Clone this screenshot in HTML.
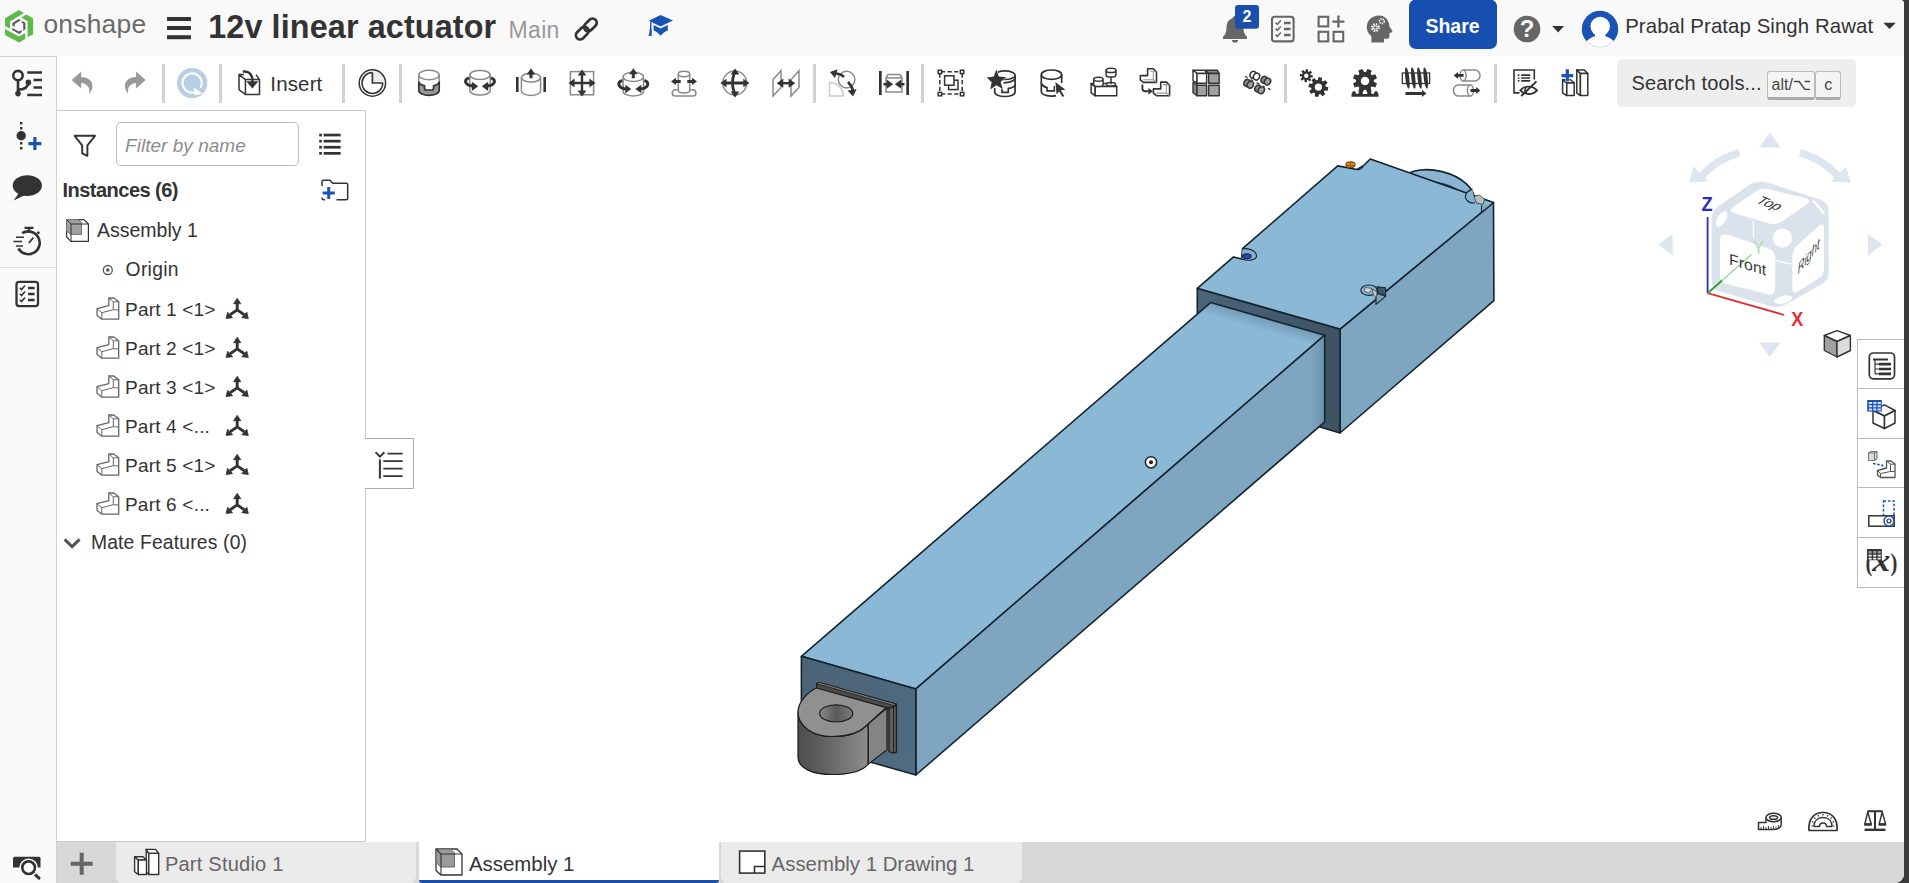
<!DOCTYPE html>
<html lang="en">
<head>
<meta charset="utf-8">
<title>12v linear actuator | Assembly 1</title>
<style>
*{box-sizing:border-box;margin:0;padding:0}
html,body{width:1909px;height:883px;overflow:hidden;background:#3b3b3b}
body{font-family:"Liberation Sans",sans-serif;color:#333;position:relative}
.abs{position:absolute}
.t{position:absolute;white-space:nowrap;line-height:1}
svg{position:absolute;overflow:visible}
.sep{position:absolute;top:64px;width:3px;height:39px;background:#d0d0d0}
.row{position:absolute;left:57px;width:308px;height:39px}
</style>
</head>
<body>
<!-- base regions -->
<div class="abs" style="left:0;top:0;width:1904px;height:883px;background:#fff;border-radius:0 4px 9px 0"></div>
<div class="abs" style="left:0;top:0;width:1904px;height:56px;background:#f9f9f9;border-top-right-radius:4px"></div>
<div class="abs" style="left:0;top:56px;width:57px;height:827px;background:#fafafa;border-top:1px solid #d2d2d2;border-right:1px solid #d2d2d2"></div>
<div class="abs" style="left:57px;top:110px;width:309px;height:1px;background:#ccc"></div>
<div class="abs" style="left:57px;top:111px;width:309px;height:731px;background:#fff;border-right:1px solid #ccc;border-bottom:1px solid #ccc"></div>
<!-- ================= HEADER ================= -->
<svg style="left:0;top:0" width="1909" height="56" viewBox="0 0 1909 56">
  <!-- onshape logo -->
  <g fill="#5db94a">
    <path d="M5 18.200 18.900 10 23.900 13 10 21.400 10 28.400 5 25.900Z"/>
    <path d="M21.400 17.400 26.400 14.500 33.100 18.400 33.100 34.400 27.600 37.100 27.600 21.200Z"/>
    <path d="M5 28.900 18.900 36.400 25.200 32.900 25.200 38.900 19.200 42.400 5 34.900Z"/>
  </g>
  <g fill="#5a5a5a">
    <path d="M12.400 22.900 18.900 18.900 20.900 20.200 14.700 23.900 14.700 26.800 12.400 25.700Z"/>
    <path d="M20.900 22.200 22.700 21.200 25.400 22.900 25.400 28.900 23.200 30.900 23.200 23.500Z"/>
    <path d="M12.200 27.900 18.900 31.600 21.700 29.900 21.700 32 19.200 33.900 12.200 30Z"/>
  </g>
  <!-- hamburger -->
  <rect x="167" y="17" width="24" height="4" fill="#333"/>
  <rect x="167" y="26" width="24" height="4" fill="#333"/>
  <rect x="167" y="35.2" width="24" height="4" fill="#333"/>
  <!-- link icon -->
  <g fill="none" stroke="#333" stroke-width="2.7" stroke-linecap="round" transform="translate(586.3 29) rotate(-45)">
    <rect x="-13" y="-4.2" width="14.5" height="8.4" rx="4.2"/>
    <rect x="-1.5" y="-4.2" width="14.5" height="8.4" rx="4.2"/>
  </g>
  <!-- graduation cap -->
  <g fill="#1a53b5">
    <path d="M660.6 14.9 673 20.6 660.6 26.6 648.6 20.8Z"/>
    <path d="M653.6 25 653.6 30.4 C656 31.4 658.6 33 660.6 35.8 C662.6 33 665.4 31.4 667.8 30.4 L667.8 25 660.6 28.6Z"/>
    <path d="M650.2 21.6 651.6 22.2 651.4 28 C652 30 652 33 651.4 36 L648.6 36 C649.6 32 649.6 30 650 28Z"/>
  </g>
  <!-- bell -->
  <path fill="#666" d="M1235 16c-1.400 0-2.400 1-2.400 2.300c-3.800 1.100-6 4.300-6 8.700c0 4.800-1.200 7.800-3.600 9.800v2.200h24v-2.200c-2.400-2-3.600-5-3.600-9.800c0-4.400-2.200-7.600-6-8.700C1237.400 17 1236.400 16 1235 16z M1231.800 40h6.400c0 1.600-1.400 2.600-3.200 2.600s-3.200-1-3.200-2.600z"/>
  <!-- badge -->
  <rect x="1235" y="5" width="24" height="23.8" rx="3" fill="#1a4fad"/>
  <!-- checklist icon -->
  <g fill="none" stroke="#666" stroke-width="2.1">
    <rect x="1272" y="16.8" width="21.6" height="24.6" rx="2.6"/>
    <path d="M1284 23h6.600M1284 29h6.600M1284 35h6.600" stroke-width="2.6"/>
    <path d="M1275.600 22.600l1.800 1.800 3.400-4M1275.600 28.600l1.800 1.800 3.400-4M1275.600 34.600l1.800 1.800 3.400-4" stroke-width="1.5"/>
  </g>
  <!-- grid plus -->
  <g fill="none" stroke="#666" stroke-width="2.1">
    <rect x="1318.600" y="16.800" width="9.600" height="9.600"/>
    <rect x="1318.600" y="31.800" width="9.600" height="9.600"/>
    <rect x="1333.600" y="31.800" width="9.600" height="9.600"/>
    <path d="M1338.400 15.600v12M1332.400 21.600h12" stroke-width="2.3"/>
  </g>
  <!-- head with gears -->
  <g>
    <path fill="#666" d="M1379 15.400c-7 0-12.200 5-12.200 11.600c0 4 1.800 7 4.600 9.200v6.200h12.600v-3.600h3.400c1.200 0 2-.800 2-2v-3.600l2.400-1c.600-.300.700-.900.400-1.400l-2.800-4.600c-.200-6.200-4.400-10.800-10.400-10.800z"/>
    <circle cx="1375.400" cy="27.600" r="3.300" fill="none" stroke="#f9f9f9" stroke-width="2.200" stroke-dasharray="1.500 1.100"/>
    <circle cx="1375.400" cy="27.600" r="1.700" fill="none" stroke="#f9f9f9" stroke-width="1"/>
    <circle cx="1381.800" cy="21.200" r="2.300" fill="none" stroke="#f9f9f9" stroke-width="1.800" stroke-dasharray="1.200 .900"/>
  </g>
  <!-- share button -->
  <rect x="1409" y="-.500" width="88" height="49.500" rx="7" fill="#174fb0"/>
  <!-- help -->
  <circle cx="1527" cy="29" r="13.300" fill="#666"/>
  <path d="M1552.300 25.900h11.700l-5.850 6.500z" fill="#333"/>
  <!-- avatar -->
  <circle cx="1600" cy="29" r="18.200" fill="#1a53b5"/>
  <clipPath id="avc"><circle cx="1600" cy="29" r="18.200"/></clipPath>
  <g clip-path="url(#avc)" fill="#fff">
    <circle cx="1600.200" cy="26.400" r="9.700"/>
    <ellipse cx="1600.200" cy="46.400" rx="15.600" ry="10.600"/>
    <rect x="1595" y="32" width="10.400" height="8"/>
  </g>
  <path d="M1883.300 22.700h12.500l-6.250 6.400z" fill="#333"/>
</svg>
<div class="t" style="left:43.4px;top:10.7px;font-size:26.4px;color:#6a6a6a;letter-spacing:.25px">onshape</div>
<div class="t" style="left:208.2px;top:10.9px;font-size:32.3px;font-weight:bold;color:#333;letter-spacing:.14px">12v linear actuator</div>
<div class="t" style="left:508.600px;top:18.600px;font-size:23px;color:#999;letter-spacing:.3px">Main</div>
<div class="t" style="left:1242.4px;top:9.2px;font-size:16px;font-weight:bold;color:#fff">2</div>
<div class="t" style="left:1425.400px;top:16.800px;font-size:19.5px;font-weight:bold;color:#fff">Share</div>
<div class="t" style="left:1519.700px;top:17.300px;font-size:24px;font-weight:bold;color:#f9f9f9">?</div>
<div class="t" style="left:1625.200px;top:16.400px;font-size:20.400px;color:#333;letter-spacing:.08px">Prabal Pratap Singh Rawat</div>
<!-- ================= TOOLBAR ================= -->
<div class="sep" style="left:162px"></div><div class="sep" style="left:219px"></div><div class="sep" style="left:342px"></div><div class="sep" style="left:399px"></div><div class="sep" style="left:813px"></div><div class="sep" style="left:921px"></div><div class="sep" style="left:1284px"></div><div class="sep" style="left:1494px"></div>
<svg style="left:0;top:0" width="1909" height="112" viewBox="0 0 1909 112">
<defs>
  <path id="ah" d="M0 0 L-6.500 -4.600 L-6.500 4.600Z"/>
</defs>
<!-- left column top icon: version graph -->
<g stroke="#333" fill="none" stroke-width="2.600">
  <circle cx="18" cy="75.600" r="4.700"/>
  <path d="M18 80.300V93.500M18 89.600C24 89.600 28 88 28.400 82.600"/>
  <circle cx="18" cy="93.600" r="2.800" fill="#333" stroke="none"/>
  <circle cx="28.400" cy="82.400" r="2.800" fill="#333" stroke="none"/>
  <path d="M27.200 72.500H42M33.500 80H42M33.500 87.500H42M27.200 95H42" stroke-width="2.700"/>
</g>
<!-- undo / redo -->
<path fill="#999" d="M71.700 80 81.200 71.400V77C88 77 92.600 81 92.400 86 92.300 89 91 91.600 89.300 93.700 90 88 87.500 83.300 81.200 83.100V88.400Z"/>
<path fill="#999" d="M145.600 80 136.100 71.400V77C129.300 77 124.700 81 124.900 86 125 89 126.300 91.600 128 93.700 127.300 88 129.800 83.300 136.100 83.100V88.400Z"/>
<!-- update circle -->
<circle cx="192.100" cy="83" r="15.100" fill="#b9cde5"/>
<path d="M200.400 87.800A9.600 9.600 0 1 0 195.400 92" fill="none" stroke="#fff" stroke-width="2.100"/>
<path d="M193.600 87.600 202.600 93.400 194.600 95.600Z" fill="#fff"/>
<!-- insert -->
<g fill="none" stroke="#333" stroke-width="1.500" stroke-linejoin="round">
  <path d="M245.400 79.600H259.500V94.500H245.400ZM245.400 79.600 239 74.600V89.600L245.400 94.500M239 74.600H244M256 74.600 259.500 79.600"/>
  <path d="M242.800 71.600C249.500 70.600 252.600 75 252.500 82" stroke-width="2.400"/>
</g>
<path d="M246.200 81.200H258.400L252.400 88.400Z" fill="#333"/>
<!-- snap/clock icon -->
<g fill="none" stroke="#333" stroke-width="1.500">
  <path d="M372.400 83V69.600A13.400 13.400 0 0 1 385.800 83Z" fill="#ececec" stroke="none"/>
  <circle cx="372.400" cy="83" r="13.200"/>
  <path d="M372.400 72.600A10.400 10.400 0 1 0 382.800 83"/>
  <path d="M372.400 72.600V83H382.800" stroke-width="1.700"/>
</g>
<!-- fastened -->
<g fill="none" stroke="#8a8a8a" stroke-width="1.500">
  <ellipse cx="429" cy="75" rx="10.200" ry="4.700"/>
  <path d="M418.800 75V84M439.200 75V84"/>
  <path d="M418.800 81.600V90.600A10.200 4.700 0 0 0 439.200 90.600V81.600A10.200 4.700 0 0 1 433.600 85.800V88Q433.600 90 431.600 90H426.500Q424.500 90 424.500 88V85.800A10.200 4.700 0 0 1 418.800 81.600Z" fill="#989898" stroke="#333" stroke-width="1.700"/>
</g>
<!-- revolute -->
<g fill="none" stroke="#8a8a8a" stroke-width="1.500">
  <ellipse cx="480" cy="75" rx="10.200" ry="4.600"/>
  <path d="M469.800 75V90.500A10.200 4.600 0 0 0 490.200 90.500V75"/>
  <path d="M469 77.800C463.500 80 464.500 85.500 473.500 86.200M491 77.800C496.500 80 495.500 85.500 486.500 86.200" stroke="#333" stroke-width="3"/>
</g>
<use href="#ah" transform="translate(478.300 86.300)" fill="#333"/>
<use href="#ah" transform="translate(481.700 86.300) scale(-1 1)" fill="#333"/>
<!-- slider -->
<g fill="none" stroke="#8a8a8a" stroke-width="1.500">
  <ellipse cx="531" cy="77.600" rx="9.600" ry="4.400"/>
  <path d="M521.400 77.600V91A9.600 4.400 0 0 0 540.600 91V77.600"/>
</g>
<rect x="516" y="77" width="2.600" height="15" fill="#333"/><rect x="543.400" y="77" width="2.600" height="15" fill="#333"/>
<path d="M531 68.300 535.300 74.400H532.500V78.300H529.500V74.400H526.700Z" fill="#333"/>
<!-- planar -->
<rect x="570.400" y="71.600" width="23.200" height="23.200" fill="none" stroke="#8a8a8a" stroke-width="1.500"/>
<g fill="#333">
  <path d="M580.800 74H583.200V92H580.800ZM573 81.800H591V84.200H573Z"/>
  <path d="M582 69.500 586.400 75.600H577.600ZM582 96.500 586.400 90.400H577.600ZM568.500 83 574.600 78.600V87.400ZM595.500 83 589.400 78.600V87.400Z"/>
</g>
<!-- cylindrical -->
<g fill="none" stroke="#8a8a8a" stroke-width="1.500">
  <ellipse cx="633.300" cy="76.900" rx="10.200" ry="4.600"/>
  <path d="M623.100 76.900V91.400A10.200 4.600 0 0 0 643.500 91.400V76.900"/>
  <path d="M622.200 80.400C616.800 82.600 617.800 88.200 626.500 88.900M644.400 80.400C649.800 82.600 648.800 88.200 640.100 88.900" stroke="#333" stroke-width="3"/>
</g>
<path d="M633.300 68.300 637.600 74.200H634.800V78.200H631.800V74.200H629Z" fill="#333"/>
<use href="#ah" transform="translate(631.300 89.100) scale(.92)" fill="#333"/>
<use href="#ah" transform="translate(635.300 89.100) scale(-.92 .92)" fill="#333"/>
<!-- pin slot -->
<g fill="none" stroke="#8a8a8a" stroke-width="1.500">
  <ellipse cx="684" cy="74" rx="5.700" ry="2.700"/>
  <path d="M678.300 74V90.500A5.700 2.400 0 0 0 689.700 90.500V74"/>
  <path d="M678.300 89.800H675.400A3.100 3.100 0 0 0 675.400 96H692.800A3.100 3.100 0 0 0 692.800 89.800H689.700"/>
</g>
<path d="M671 81.400 676 77.700V79.900H680.700V82.900H676V85.100Z" fill="#333"/>
<path d="M697 81.400 692 77.700V79.900H687.300V82.900H692V85.100Z" fill="#333"/>
<!-- ball -->
<circle cx="734.800" cy="83" r="11.900" fill="none" stroke="#8a8a8a" stroke-width="1.500"/>
<path d="M725 83H745M734.500 73C732 79 732 87 734.500 93" fill="none" stroke="#333" stroke-width="2.800"/>
<use href="#ah" transform="translate(720.300 83) scale(-.95 .95)" fill="#333"/>
<use href="#ah" transform="translate(749.500 83) scale(.95)" fill="#333"/>
<use href="#ah" transform="translate(735 68.400) rotate(-90) scale(.95)" fill="#333"/>
<use href="#ah" transform="translate(735 97.600) rotate(90) scale(.95)" fill="#333"/>
<!-- parallel -->
<g fill="none" stroke="#8a8a8a" stroke-width="1.500">
  <path d="M773 79.600 781 70.800V87.400L773 96Z M791 79.600 799 70.800V87.400L791 96Z"/>
</g>
<path d="M781 82H791V84.400H781Z" fill="#333"/>
<use href="#ah" transform="translate(776.800 83.200) scale(-1 1)" fill="#333"/>
<use href="#ah" transform="translate(795.200 83.200)" fill="#333"/>
<!-- tangent -->
<g fill="none" stroke-width="1.500">
  <path d="M829.500 96V82.500A14 14 0 0 1 843.500 96Z" stroke="#ccc"/>
  <circle cx="846.600" cy="79.600" r="8.300" stroke="#8a8a8a"/>
  <path d="M835 73.500C839 73.500 842 75 844 77M848 82C851 85 852.500 88 853 91" stroke="#333" stroke-width="2.600"/>
</g>
<use href="#ah" transform="translate(830 72) rotate(195)" fill="#333"/>
<use href="#ah" transform="translate(853 96.400) rotate(82)" fill="#333"/>
<!-- width -->
<rect x="879" y="71" width="2.700" height="24" fill="#333"/><rect x="906.300" y="71" width="2.700" height="24" fill="#333"/>
<path d="M886 78 888 74.600H900L902 78V92H886ZM886 78H902" fill="none" stroke="#8a8a8a" stroke-width="1.500"/>
<path d="M883.500 83H888V85.400H883.500ZM900 83H904.500V85.400H900Z" fill="#333"/>
<use href="#ah" transform="translate(893.200 84.200)" fill="#333"/>
<use href="#ah" transform="translate(894.800 84.200) scale(-1 1)" fill="#333"/>
<!-- group -->
<g fill="none" stroke="#333" stroke-width="1.500">
  <path d="M941 71.800H961M941 94H961M939.800 73.500V92.500M962.200 73.500V92.500" stroke-dasharray="4.200 2.400"/>
  <rect x="938.200" y="70.200" width="3.400" height="3.400" fill="#fff"/><rect x="960.400" y="70.200" width="3.400" height="3.400" fill="#fff"/>
  <rect x="938.200" y="92.400" width="3.400" height="3.400" fill="#fff"/><rect x="960.400" y="92.400" width="3.400" height="3.400" fill="#fff"/>
  <rect x="948.600" y="80.200" width="9.400" height="9.400"/>
  <rect x="944.600" y="75.800" width="9.400" height="9.400" fill="#fff"/>
</g>
<!-- favorite standard content (star + cylinder) -->
<g fill="none" stroke="#333" stroke-width="1.700">
  <ellipse cx="1004.900" cy="75.200" rx="10.200" ry="4.300"/>
  <path d="M1015.100 75.200V92A10.200 4.500 0 0 1 994.700 92V88"/>
  <path d="M1003.500 82.800C1009 82.600 1014 81 1015.100 78.600"/>
  <path d="M1002 87V92.400H1008.300V88.400C1011.500 88 1014.500 86.800 1015.100 85"/>
</g>
<path d="M996.200 69.600 998.900 76.400 1006.200 77.200 1000.600 82 1002.800 89 996.300 85.300 990.200 89.400 991.700 82.300 986.800 77.400 993.900 76.500Z" fill="#333" stroke="#fff" stroke-width="1" paint-order="stroke"/>
<!-- select standard content (cyl + cursor) -->
<g fill="none" stroke="#333" stroke-width="1.700">
  <ellipse cx="1051.500" cy="74.700" rx="10.200" ry="4.700"/>
  <path d="M1041.300 74.700V91.500A10.200 4.600 0 0 0 1056 95.600M1061.700 74.700V83"/>
  <path d="M1041.300 83.500C1042.500 85.800 1044.500 87.200 1047 87.700V90.800H1054.400V86"/>
</g>
<path d="M1055.400 81.900 1065.400 89.800 1060.700 90.300 1064.300 96 1062.600 97.100 1059.100 91.400 1056.600 94.600Z" fill="#333" stroke="#fff" stroke-width="1.200" paint-order="stroke"/>
<!-- lego / standard -->
<g fill="#fff" stroke="#333" stroke-width="1.500" stroke-linejoin="round">
  <path d="M1091.100 83.500 1095.200 86.600V95.800L1091.100 92.600Z"/>
  <path d="M1091.100 83.500 1095.200 86.600H1116.700L1113.500 83.500Z"/>
  <rect x="1095.200" y="86.600" width="21.500" height="9.200"/>
  <path d="M1093.700 79.300V84.500A4.700 2 0 0 0 1103.100 84.500V79.300"/><ellipse cx="1098.400" cy="79.300" rx="4.700" ry="2"/>
  <ellipse cx="1111" cy="84.300" rx="4.500" ry="1.700"/>
  <path d="M1111 84.300V76.500"/>
  <path d="M1106.100 70.400V75A4.900 2.100 0 0 0 1115.900 75V70.400"/><ellipse cx="1111" cy="70.400" rx="4.900" ry="2.100"/>
</g>
<!-- replicate -->
<g id="repl" stroke-linejoin="round">
  <path d="M1147.600 68.800H1153.400L1156.500 72V82.400H1143.400L1140.300 79.800V75.600H1147.600Z" fill="#fff" stroke="#333" stroke-width="1.600"/>
  <path d="M1149.800 71.300H1153.300V79.800H1143.200M1153.300 71.300 1156.500 72M1153.300 79.800 1156.500 82.400" fill="none" stroke="#999" stroke-width="1.100"/>
</g>
<use href="#repl" x="13.100" y="13.300"/>
<path d="M1142.400 84.500V88.500C1142.400 90.600 1143.400 91.300 1145.500 91.300H1148.700" fill="none" stroke="#333" stroke-width="1.900"/>
<path d="M1153 91.300 1148.400 88.100V94.500Z" fill="#333"/>
<!-- pattern 2x2 -->
<g stroke="#333" stroke-width="1.400" stroke-linejoin="round">
  <path d="M1193 70.300H1204.800L1206.600 73.500H1197Z" fill="#fff"/>
  <path d="M1205.600 70.300H1217.400L1219.200 73.500H1208.600Z" fill="#8a8a8a"/>
  <path d="M1193 70.300 1197 73.500V83.200L1193 80.600Z" fill="#fff"/>
  <path d="M1193 82.400 1197 85.200V95.800L1193 92.800Z" fill="#8a8a8a"/>
  <rect x="1197" y="73.500" width="9.600" height="9.700" fill="#fff"/>
  <rect x="1208.600" y="73.500" width="10.600" height="9.700" fill="#a0a0a0"/>
  <rect x="1197" y="85.200" width="9.600" height="10.600" fill="#a0a0a0"/>
  <rect x="1208.600" y="85.200" width="10.600" height="10.600" fill="#a0a0a0"/>
  <path d="M1197 83.200 1193 80.600M1206.600 73.500 1208.600 73.500M1206.600 83.200V85.200M1197 83.200V85.200" fill="none" stroke-width="1"/>
</g>
<!-- circular pattern -->
<g stroke="#333" stroke-width="1.500">
  <g transform="translate(1254.800 75.700) rotate(28)"><ellipse cx="-1.900" cy="0" rx="3" ry="3.500" fill="#fff"/><ellipse cx="1.900" cy="0" rx="3" ry="3.500" fill="#fff"/></g>
  <g transform="translate(1265.800 80.600) rotate(28)"><ellipse cx="-1.900" cy="0" rx="3" ry="3.500" fill="#8a8a8a"/><ellipse cx="1.900" cy="0" rx="3" ry="3.500" fill="#a0a0a0"/></g>
  <g transform="translate(1248.700 83.800) rotate(28)"><ellipse cx="-1.900" cy="0" rx="3" ry="3.500" fill="#8a8a8a"/><ellipse cx="1.900" cy="0" rx="3" ry="3.500" fill="#a0a0a0"/></g>
  <g transform="translate(1259.600 89.400) rotate(28)"><ellipse cx="-1.900" cy="0" rx="3" ry="3.500" fill="#8a8a8a"/><ellipse cx="1.900" cy="0" rx="3" ry="3.500" fill="#a0a0a0"/></g>
  <path d="M1245 76.200 1247.500 77.800M1250.500 79.500 1253 80.800M1256.500 82.600 1259.500 84.200M1263 86 1265 87M1268 88.200 1270.500 89.600" fill="none" stroke-width="1.300"/>
</g>
<!-- gears -->
<path fill="#333" fill-rule="evenodd" d="M1310.6 74.9 L1312.9 75.2 L1312.6 77.5 L1310.4 77.4 L1309.9 78.2 L1311.3 80.0 L1309.5 81.5 L1308.0 79.8 L1307.1 80.0 L1306.8 82.3 L1304.5 82.0 L1304.6 79.8 L1303.8 79.3 L1302.0 80.7 L1300.5 78.9 L1302.2 77.4 L1302.0 76.5 L1299.7 76.2 L1300.0 73.9 L1302.2 74.0 L1302.7 73.2 L1301.3 71.4 L1303.1 69.9 L1304.6 71.6 L1305.5 71.4 L1305.8 69.1 L1308.1 69.4 L1308.0 71.6 L1308.8 72.1 L1310.6 70.7 L1312.1 72.5 L1310.4 74.0Z M1308.5 75.7 A2.2 2.2 0 1 0 1304.1 75.7 A2.2 2.2 0 1 0 1308.5 75.7Z"/>
<path fill="#333" fill-rule="evenodd" d="M1325.6 86.4 L1328.4 87.3 L1327.7 90.8 L1324.7 90.5 L1323.9 91.7 L1325.3 94.3 L1322.4 96.3 L1320.5 94.0 L1319.1 94.3 L1318.2 97.1 L1314.7 96.4 L1315.0 93.4 L1313.8 92.6 L1311.2 94.0 L1309.2 91.1 L1311.5 89.2 L1311.2 87.8 L1308.4 86.9 L1309.1 83.4 L1312.1 83.7 L1312.9 82.5 L1311.5 79.9 L1314.4 77.9 L1316.3 80.2 L1317.7 79.9 L1318.6 77.1 L1322.1 77.8 L1321.8 80.8 L1323.0 81.6 L1325.6 80.2 L1327.6 83.1 L1325.3 85.0Z M1322.0 87.1 A3.6 3.6 0 1 0 1314.8 87.1 A3.6 3.6 0 1 0 1322.0 87.1Z"/>
<!-- rack pinion -->
<path fill="#333" fill-rule="evenodd" d="M1373.9 81.8 L1377.0 83.5 L1375.3 87.6 L1371.9 86.5 L1370.6 87.8 L1371.7 91.2 L1367.6 92.9 L1365.9 89.8 L1364.1 89.8 L1362.4 92.9 L1358.3 91.2 L1359.4 87.8 L1358.1 86.5 L1354.7 87.6 L1353.0 83.5 L1356.1 81.8 L1356.1 80.0 L1353.0 78.3 L1354.7 74.2 L1358.1 75.3 L1359.4 74.0 L1358.3 70.6 L1362.4 68.9 L1364.1 72.0 L1365.9 72.0 L1367.6 68.9 L1371.7 70.6 L1370.6 74.0 L1371.9 75.3 L1375.3 74.2 L1377.0 78.3 L1373.9 80.0Z M1369.2 80.9 A4.2 4.2 0 1 0 1360.8 80.9 A4.2 4.2 0 1 0 1369.2 80.9Z"/>
<path fill="#333" d="M1351.500 96.800V94L1353 91.300H1355L1356.500 94H1358L1359.500 91.300H1361.500L1363 94H1367L1368.500 91.300H1370.500L1372 94H1373.500L1375 91.300H1377L1378.500 94V96.800Z"/>
<!-- screw -->
<g fill="none" stroke="#333">
  <rect x="1402.300" y="73" width="27.300" height="10.500" stroke-width="1.300"/>
</g>
<g fill="#333">
  <path d="M1406 68.300C1408.200 72 1409.300 82 1408.600 87.700 1406.400 84 1405.300 74 1406 68.300Z" stroke="#333" stroke-width="1.700" stroke-linejoin="round"/>
  <path d="M1412 68.300C1414.200 72 1415.300 82 1414.600 87.700 1412.400 84 1411.300 74 1412 68.300Z" stroke="#333" stroke-width="1.700" stroke-linejoin="round"/>
  <path d="M1418.200 68.300C1420.400 72 1421.500 82 1420.800 87.700 1418.600 84 1417.500 74 1418.200 68.300Z" stroke="#333" stroke-width="1.700" stroke-linejoin="round"/>
  <path d="M1424.400 68.300C1426.600 72 1427.700 82 1427 87.700 1424.800 84 1423.700 74 1424.400 68.300Z" stroke="#333" stroke-width="1.700" stroke-linejoin="round"/>
  <path d="M1405.500 92H1422V89.700L1426.400 93.400 1422 97.100V94.900H1405.500Z"/>
</g>
<!-- linear relation -->
<g fill="#fff" stroke="#8a8a8a" stroke-width="1.500">
  <path d="M1463.100 69.900H1475A5 5.500 0 0 1 1475 80.900H1463.100"/><ellipse cx="1463.100" cy="75.400" rx="3" ry="5.500"/>
  <path d="M1470.400 85H1458.500A5 5.500 0 0 0 1458.500 96H1470.400"/><ellipse cx="1470.400" cy="90.500" rx="3" ry="5.500"/>
</g>
<path d="M1453.700 75.400 1458 72V74H1463.600V76.800H1458V78.800Z" fill="#333"/>
<path d="M1480.400 90.500 1476.100 87.100V89.100H1470.500V91.900H1476.100V93.900Z" fill="#333"/>
<!-- doc eye -->
<g fill="none" stroke="#333" stroke-width="1.600">
  <path d="M1519.500 92.900H1514V70H1534.300V79.500"/>
  <path d="M1521.200 75.100H1530.200M1521.200 78H1530.200M1521.200 80.900H1530.200" stroke-width="1.700"/>
  <path d="M1517.800 75.100H1519.400M1517.800 78H1519.400M1517.800 80.900H1519.400" stroke-width="1.700"/>
  <path d="M1520.300 90.300C1524.500 85.400 1532.700 85.400 1537 90.300 1532.700 95.200 1524.500 95.200 1520.300 90.300Z" stroke-width="1.900" fill="#fff"/>
  <path d="M1526 88A3 3 0 0 0 1527 93" stroke-width="1.600"/>
  <path d="M1521.200 96 1536.500 81.400" stroke-width="2"/>
</g>
<!-- create part studio in context -->
<g fill="#fff" stroke="#333" stroke-width="1.500" stroke-linejoin="round">
  <path d="M1576.800 69.900 1580.400 73.500V95.500L1576.800 93.200Z"/>
  <path d="M1576.800 69.900H1584.100L1587.800 73.500H1580.400Z"/>
  <rect x="1580.400" y="73.500" width="7.400" height="22"/>
  <path d="M1562.600 79.800 1566.800 83V95.500L1562.600 93.200Z"/>
  <path d="M1562.600 79.800H1570.600L1574.200 83H1566.800Z"/>
  <rect x="1566.800" y="83" width="7.400" height="12.500"/>
</g>
<path d="M1565.700 69.300v4.700h-4.200v3.200h4.200v4.300h3.200v-4.300h4.300v-3.200h-4.300v-4.700z" fill="#1a53b5" stroke="#fff" stroke-width=".900" paint-order="stroke"/>
</svg>
<div class="t" style="left:270.300px;top:73.800px;font-size:20.500px;letter-spacing:.15px;color:#333">Insert</div>
<!-- search tools -->
<div class="abs" style="left:1617px;top:59px;width:239px;height:48px;background:#eee;border-radius:5px"></div>
<div class="t" style="left:1631.400px;top:73.200px;font-size:20px;color:#333;letter-spacing:.17px">Search tools...</div>
<div class="abs" style="left:1767px;top:71.400px;width:47.500px;height:28.400px;background:#f4f4f4;border:1px solid #bbb;border-bottom:3px solid #aaa;border-radius:3px"></div>
<div class="abs" style="left:1815.300px;top:71.400px;width:25.600px;height:28.400px;background:#f4f4f4;border:1px solid #bbb;border-bottom:3px solid #aaa;border-radius:3px"></div>
<div class="t" style="left:1771.500px;top:76.500px;font-size:16px;color:#444;font-family:'Liberation Sans','DejaVu Sans',sans-serif">alt/⌥</div>
<div class="t" style="left:1824.200px;top:76.500px;font-size:16px;color:#444">c</div>
<!-- ================= LEFT COLUMN ================= -->
<div class="abs" style="left:0;top:267px;width:56px;height:1px;background:#ddd"></div>
<svg style="left:0;top:0" width="57" height="883" viewBox="0 0 57 883">
  <!-- add feature (dot + plus) -->
  <path d="M21.200 122V150" stroke="#333" stroke-width="2.400" stroke-dasharray="2.600 2.400" fill="none"/>
  <circle cx="21.200" cy="135.800" r="4.700" fill="#333"/>
  <path d="M33.300 142h-4.900v3.200h4.900v4.900h3.200v-4.900h4.900v-3.200h-4.900v-4.900h-3.200z" fill="#1a53b5"/>
  <!-- comment bubble -->
  <ellipse cx="27.300" cy="185.600" rx="14.600" ry="10.300" fill="#333"/>
  <path d="M19 193 13.500 200.400 26 194.500Z" fill="#333"/>
  <!-- stopwatch -->
  <g fill="none" stroke="#333" stroke-width="2.600">
    <path d="M22.200 233.200A11.400 11.400 0 1 1 18.400 248.500" />
    <path d="M29 232.500V228M24.500 227.800H33.500" stroke-width="2.200"/>
    <path d="M37.400 233.600 39.200 231.800" stroke-width="2.400"/>
    <path d="M28.800 243 33.400 237.600" stroke-width="1.800"/>
    <path d="M16 237.200H24M13.500 241.600H22M16 246H23" stroke-width="1.500"/>
  </g>
  <!-- checklist -->
  <g fill="none" stroke="#333" stroke-width="2.300">
    <rect x="16.500" y="281.900" width="21.500" height="24.300" rx="2.600"/>
    <path d="M28 288h6.600M28 294h6.600M28 300h6.600" stroke-width="2.700"/>
    <path d="M19.800 287.800l1.800 1.800 3.400-4M19.800 293.800l1.800 1.800 3.400-4M19.800 299.800l1.800 1.800 3.400-4" stroke-width="1.500"/>
  </g>
  <!-- bottom search tab icon -->
  <path d="M13 858.200A1.500 1.500 0 0 1 14.500 856.700H39A1.500 1.500 0 0 1 40.500 858.200V867.500H13Z" fill="#333"/>
  <circle cx="28.600" cy="867.800" r="6.300" fill="#fafafa" stroke="#333" stroke-width="2.600"/>
  <path d="M33 872.600 39 878.200" stroke="#333" stroke-width="3" stroke-linecap="round"/>
  <circle cx="28.600" cy="867.800" r="8.600" fill="none" stroke="#fafafa" stroke-width="1.600"/>
</svg>
<!-- ================= INSTANCE PANEL ================= -->
<div class="abs" style="left:116.300px;top:122.200px;width:182.300px;height:43.500px;border:1px solid #bbb;border-radius:5px;background:#fff"></div>
<div class="t" style="left:125px;top:135.600px;font-size:19px;font-style:italic;color:#8c8c8c;letter-spacing:.03px">Filter by name</div>
<div class="t" style="left:62.500px;top:179.900px;font-size:20px;font-weight:bold;color:#333;letter-spacing:-.52px">Instances (6)</div>
<div class="t" style="left:97px;top:221.200px;font-size:19.500px">Assembly 1</div>
<div class="t" style="left:125.600px;top:260.400px;font-size:19.300px;letter-spacing:.3px">Origin</div>
<div class="t" style="left:125px;top:299.600px;font-size:19.100px;letter-spacing:.15px">Part 1 &lt;1&gt;</div>
<div class="t" style="left:125px;top:338.600px;font-size:19.100px;letter-spacing:.15px">Part 2 &lt;1&gt;</div>
<div class="t" style="left:125px;top:377.600px;font-size:19.100px;letter-spacing:.15px">Part 3 &lt;1&gt;</div>
<div class="t" style="left:125px;top:416.600px;font-size:19px;letter-spacing:.2px">Part 4 &lt;...</div>
<div class="t" style="left:125px;top:455.600px;font-size:19.100px;letter-spacing:.15px">Part 5 &lt;1&gt;</div>
<div class="t" style="left:125px;top:494.600px;font-size:19px;letter-spacing:.2px">Part 6 &lt;...</div>
<div class="t" style="left:90.900px;top:533.400px;font-size:19.300px;letter-spacing:.18px">Mate Features (0)</div>
<!-- panel collapse tab -->
<div class="abs" style="left:365px;top:438px;width:49px;height:51px;background:#fff;border:1px solid #ababab;border-left:none"></div>
<svg style="left:0;top:0" width="430" height="600" viewBox="0 0 430 600">
<defs>
  <g id="parti" fill="none" stroke="#666" stroke-width="1.300" stroke-linejoin="round">
    <path d="M12.500 .800H17.500L22.400 4.500V22H5.500L.700 18V11.500L12.500 8.500Z" fill="#fff"/>
    <path d="M12.500 .800 17 4.600V12.500M17 4.600H22.400M17 12.500 22.400 12.800M17 12.500 5.500 15.500 .700 11.500M5.500 15.500V22" stroke-width="1"/>
  </g>
  <g id="matec" fill="#333" stroke="#333" stroke-linejoin="round">
    <path d="M11.600 4V12L4.500 16.800M11.600 12 18.700 16.800" fill="none" stroke-width="2.900"/>
    <path d="M11.600 .400 15.200 5.800H8Z" stroke-width=".800"/>
    <path d="M.500 20.600 2 14.300 7 19.800Z" stroke-width=".800"/>
    <path d="M22.700 20.600 21.200 14.300 16.200 19.800Z" stroke-width=".800"/>
  </g>
  <g id="asmi" stroke="#333" stroke-width="1.200" stroke-linejoin="round">
    <path d="M.600 .600H18L22.400 5V22.400H5L.600 18Z" fill="#fff"/>
    <path d="M.600 .600H12.500L15.500 3.500V15.500H4.500L.600 12Z" fill="#a0a0a0" stroke="#777" stroke-width="1"/>
    <path d="M.600 .600 5 5H22.400M5 5V22.400" fill="none" stroke-width="1"/>
  </g>
</defs>
  <!-- funnel -->
  <path d="M74.600 135.800H95L87.400 145.400V155.800L82.200 153.400V145.400Z" fill="none" stroke="#333" stroke-width="1.900" stroke-linejoin="round"/>
  <!-- list icon -->
  <g fill="#333">
    <rect x="319.200" y="133.700" width="2.700" height="2.700"/><rect x="323.600" y="133.700" width="17" height="2.700"/>
    <rect x="319.200" y="139.800" width="2.700" height="2.700"/><rect x="323.600" y="139.800" width="17" height="2.700"/>
    <rect x="319.200" y="145.900" width="2.700" height="2.700"/><rect x="323.600" y="145.900" width="17" height="2.700"/>
    <rect x="319.200" y="152" width="2.700" height="2.700"/><rect x="323.600" y="152" width="17" height="2.700"/>
  </g>
  <!-- folder plus -->
  <path d="M322 186V181.800A1.500 1.500 0 0 1 323.500 180.300H330L332.600 183.300H346.200A1.500 1.500 0 0 1 347.700 184.800V198.200A1.500 1.500 0 0 1 346.200 199.700H336.500M325 199.700H323.500A1.500 1.500 0 0 1 322 198.200V197.500" fill="none" stroke="#333" stroke-width="1.500"/>
  <path d="M327.200 187v4.500h-4.600v3h4.600v4.500h3v-4.500h4.600v-3h-4.600v-4.500z" fill="#1a53b5"/>
  <!-- assembly icon -->
  <use href="#asmi" x="66" y="219"/>
  <!-- origin -->
  <circle cx="107.800" cy="270" r="4.500" fill="none" stroke="#555" stroke-width="1.300"/>
  <circle cx="107.800" cy="270" r="1.800" fill="#555"/>
  <!-- part rows -->
  <use href="#parti" x="96.300" y="297.200"/><use href="#matec" x="225.600" y="297.900"/>
  <use href="#parti" x="96.300" y="336.200"/><use href="#matec" x="225.600" y="336.900"/>
  <use href="#parti" x="96.300" y="375.200"/><use href="#matec" x="225.600" y="375.900"/>
  <use href="#parti" x="96.300" y="414.200"/><use href="#matec" x="225.600" y="414.900"/>
  <use href="#parti" x="96.300" y="453.200"/><use href="#matec" x="225.600" y="453.900"/>
  <use href="#parti" x="96.300" y="492.200"/><use href="#matec" x="225.600" y="492.900"/>
  <!-- chevron -->
  <path d="M64.600 539.400 72.100 546.600 79.600 539.400" fill="none" stroke="#555" stroke-width="3"/>
  <!-- collapse tab icon -->
  <g fill="none" stroke="#333" stroke-width="1.800">
    <path d="M379.900 459.400V478.600" stroke-width="2"/>
    <path d="M387.600 453.700H402.600M383.300 461.200H402.600M383.300 468.700H402.600M383.300 476.200H402.600"/>
    <path d="M375.500 452.200 379.900 456.600 384.400 452.200" stroke-width="1.900"/>
  </g>
</svg>
<!-- ================= CANVAS / 3D MODEL ================= -->
<svg style="left:0;top:0" width="1909" height="883" viewBox="0 0 1909 883">
<defs>
  <linearGradient id="gdark" x1="0" y1="0" x2="1" y2="0"><stop offset="0" stop-color="#4c657a"/><stop offset=".6" stop-color="#435a6c"/><stop offset="1" stop-color="#3d5263"/></linearGradient>
  <linearGradient id="gdark2" x1="0" y1="0" x2="1" y2="1"><stop offset="0" stop-color="#4b6376"/><stop offset="1" stop-color="#506b82"/></linearGradient>
  <linearGradient id="gcyl" x1="0" y1="0" x2="1" y2="0"><stop offset="0" stop-color="#4e4e4e"/><stop offset=".25" stop-color="#5a5a5a"/><stop offset="1" stop-color="#8c8c8c"/></linearGradient>
  <linearGradient id="gao" gradientUnits="userSpaceOnUse" x1="1268" y1="318.800" x2="1264.400" y2="331.300"><stop offset="0" stop-color="#1e3850" stop-opacity=".22"/><stop offset="1" stop-color="#1e3850" stop-opacity="0"/></linearGradient>
  <linearGradient id="gao2" gradientUnits="userSpaceOnUse" x1="1324.700" y1="378" x2="1311" y2="378"><stop offset="0" stop-color="#1e3850" stop-opacity=".18"/><stop offset="1" stop-color="#1e3850" stop-opacity="0"/></linearGradient>
  <linearGradient id="ghole" x1="0" y1="0" x2="1" y2="0"><stop offset="0" stop-color="#8a8a8a"/><stop offset=".5" stop-color="#5a5a5a"/><stop offset="1" stop-color="#7a7a7a"/></linearGradient>
</defs>
<g stroke="#15232e" stroke-width="1.600" stroke-linejoin="round">
  <!-- motor cap cylinder behind -->
  <ellipse cx="1437" cy="192" rx="38" ry="21" transform="rotate(14 1437 192)" fill="#89b5d3"/>
  <path d="M1421 183C1436 180 1454 186 1466 197" fill="none" stroke-width="2.500" stroke="#2c4152"/>
  <!-- big box right face -->
  <path d="M1493.500 202.500 1493.900 300.600 1340 433 1340 329.100Z" fill="#7ea6c1"/>
  <!-- big box front face -->
  <path d="M1197.300 288.300 1340 329.100 1340 433 1197.300 390Z" fill="url(#gdark)"/>
  <!-- big box top face -->
  <path d="M1197.300 288.300 1233.500 256.900 1241.500 259 1242.500 248.700 1337.700 165.900 1357 169.500 1363 166 1370.300 159 1493.500 202.500 1340 329.100Z" fill="#8bb8d5"/>
  <!-- tube top face -->
  <path d="M1210.600 302.600 1324.700 335.200 915.900 688.900 801.400 656.300Z" fill="#8bb8d5"/>
  <!-- tube right face -->
  <path d="M1324.700 335.200 1324.700 421.900 915.900 775 915.900 688.900Z" fill="#7ea6c1"/>
  <!-- tube front face -->
  <path d="M801.400 656.300 915.900 688.900 915.900 775 801.400 742.500Z" fill="url(#gdark2)"/>
</g>
<path d="M1210.600 302.600 1324.700 335.200 1255 395.500 1141 362.500Z" fill="url(#gao)"/>
<path d="M1324.700 335.200 1324.700 421.900 1250 486.500 1250 400Z" fill="url(#gao2)"/>
<!-- screws / notches on big box -->
<g stroke="#15232e" stroke-width="1.100" stroke-linejoin="round">
  <ellipse cx="1350.500" cy="164.700" rx="4.600" ry="2.800" fill="#e08a1c" stroke="#7a4a10"/>
  <path d="M1346 165.500H1355M1350.500 162V167.500" stroke="#8a5210" stroke-width=".800"/>
  <path d="M1357 169.500C1360 170 1362.500 168.500 1363 166" fill="none"/>
  <!-- left notch -->
  <path d="M1242.500 249C1250 247.500 1256.500 251.500 1256.500 256 1256.500 260 1249 261.500 1241.500 259" fill="#84b0cf"/>
  <ellipse cx="1246.800" cy="256.300" rx="4.400" ry="2.500" fill="#2a4a9a" stroke="#1a2a5a"/>
  <!-- right-mid notch -->
  <ellipse cx="1369" cy="290.200" rx="8.200" ry="5.200" fill="#86b2d1"/>
  <path d="M1377 286.800 1385.600 287.800 1385.600 296.300 1377.600 293.400Z" fill="#3f5669"/>
  <path d="M1376 296.500 1376 304.400 1385.600 296.300 1377.600 293.400Z" fill="#7ea6c1"/>
  <path d="M1365 287.500 1372 288.500 1369.500 293 1364.500 291.500Z" fill="#d8d8d8" stroke="#444" stroke-width=".700"/>
  <path d="M1372.500 289 1377 292 1376.500 298 1373 294Z" fill="#c4c4c4" stroke="#444" stroke-width=".700"/>
  <!-- back-right notch -->
  <path d="M1472.500 189.400C1466 191 1463.500 196.500 1467 200.500 1469.500 203 1473 203.500 1475 202.500" fill="#86b2d1"/>
  <path d="M1474 196.500 1479.500 195 1484.500 199.500 1483 204.500 1476.500 203Z" fill="#b8c0c6" stroke="#333" stroke-width=".800"/>
  <path d="M1481.500 205.500 1481.500 212.500 1491.500 204.400" fill="#7ea6c1"/>
</g>
<!-- origin marker -->
<circle cx="1151" cy="462.300" r="5.600" fill="#fff" stroke="#222" stroke-width="1.500"/>
<circle cx="1151" cy="462.300" r="2" fill="#222"/>
<!-- clevis -->
<g stroke="#1c1c1c" stroke-width="1.200" stroke-linejoin="round">
  <!-- plate right strip -->
  <path d="M889 706.500 896.400 705.200 896.400 752.300 893.600 753.200 889 751.600Z" fill="#5e5e5e"/>
  <path d="M893.600 706V753" fill="none" stroke-width="1"/>
  <!-- body flat side -->
  <path d="M868 724 887 708 887 749.600 868 764.400Z" fill="#848484"/>
  <!-- body cylinder side -->
  <path d="M798 711.600V757C798 768 812 774.500 832 774.500 850 774.500 863 770.500 868 764.400V724C860 733 846 736.500 832 736.500 812 736.500 798 726 798 711.600Z" fill="url(#gcyl)"/>
  <!-- body top -->
  <path d="M819 686.500 888 706 868 724C860 733 846 736.500 832 736.500 812 736.500 798 726 798 711.600 798 703 806 692.500 819 686.500Z" fill="#909090"/>
  <ellipse cx="836.200" cy="713.400" rx="16.500" ry="8.600" fill="url(#ghole)"/>
  <!-- plate top band -->
  <path d="M816.600 683.600 819.400 682.500 896.400 704.200 896.400 705.400 889 708.400 816.600 688Z" fill="#4a4a4a"/>
  <path d="M816.600 683.600 819.400 682.500 896.400 704.200 893.600 705.400Z" fill="#8a8a8a" stroke-width=".800"/>
</g>
<!-- ======== view cube ======== -->
<g fill="#dde6ee">
  <path d="M1769.800 132.800 1780.400 147.400H1759.200Z"/>
  <path d="M1769.800 357 1780.400 342.400H1759.200Z"/>
  <path d="M1658 244.600 1672.600 234V255.200Z"/>
  <path d="M1882.600 244.600 1868 234V255.200Z"/>
  <path d="M1739.600 152.600C1724 157 1710 166 1700 178" fill="none" stroke="#dde6ee" stroke-width="7.500"/>
  <path d="M1689 182.600 1693.500 166.500 1708.500 181.600Z"/>
  <path d="M1800 152.600C1815.600 157 1829.600 166 1839.600 178" fill="none" stroke="#dde6ee" stroke-width="7.500"/>
  <path d="M1850.600 182.600 1846.100 166.500 1831.100 181.600Z"/>
</g>
<g>
  <!-- cube body -->
  <path d="M1711.700 219 Q1711.700 211 1718 206.500 L1750 184.600 Q1757 180 1766 182 L1820 199.500 Q1828.600 202.500 1828.600 211 L1828.600 272 Q1828.600 280 1822 284 L1787 304 Q1778 309 1768 305.500 L1719 291 Q1711.700 289 1711.700 281Z" fill="#dae3ec"/>
  <!-- faces -->
  <path d="M1733 207 Q1727.500 211 1735 213.500 L1769 223.500 Q1775.500 225.500 1782 221.500 L1806.500 204.500 Q1812.500 200.500 1805 198 L1768 189 Q1762 187.500 1756.500 191Z" fill="#fff"/>
  <path d="M1719.900 241 Q1719.900 232 1728 234.800 L1768 248.500 Q1775.200 251 1775.200 259 L1775.200 288 Q1775.200 296.500 1767 294 L1727 284 Q1719.900 282 1719.900 275Z" fill="#fff"/>
  <path d="M1792.400 256 Q1792.400 249.500 1797.500 245 L1818 226.500 Q1824.100 221.500 1824.100 229.500 L1824.100 268 Q1824.100 274.500 1819 278 L1798.500 291 Q1792.400 295 1792.400 288Z" fill="#fff"/>
  <!-- corner circles -->
  <ellipse cx="1721.700" cy="219" rx="4.200" ry="8.600" fill="#fff" transform="rotate(32 1721.700 219)"/>
  <circle cx="1782.400" cy="238" r="9.600" fill="#fff"/>
  <ellipse cx="1783.300" cy="299.600" rx="9" ry="3.800" fill="#fff" transform="rotate(-14 1783.300 299.600)"/>
  <path d="M1813.200 200.800 1824.100 213.500" stroke="#fff" stroke-width="2.500"/>
  <path d="M1753.400 220.700V237M1775.200 260.600 1791.500 264.200" stroke="#fff" stroke-width="1.300"/>
</g>
<!-- axes -->
<path d="M1707.600 217.100V293.200" stroke="#2a2ad0" stroke-width="1.800"/>
<path d="M1707.600 293.200 1784.200 315" stroke="#e03030" stroke-width="1.800"/>
<path d="M1707.600 293.200 1722 280.500" stroke="#30a030" stroke-width="1.900"/>
<path d="M1722 280.500 1751.600 254.300" stroke="#8fd08f" stroke-width="1.100"/>
<g font-family="Liberation Sans, sans-serif" font-weight="bold">
  <text x="1701.600" y="210.800" font-size="20" fill="#2a2ad0" textLength="11.200" lengthAdjust="spacingAndGlyphs">Z</text>
  <text x="1791.300" y="325.800" font-size="20" fill="#e03030" textLength="12" lengthAdjust="spacingAndGlyphs">X</text>
  <text x="1753.200" y="254.300" fill="#a4dba4" font-weight="normal" font-size="19" textLength="10.500" lengthAdjust="spacingAndGlyphs">Y</text>
</g>
<g font-family="Liberation Sans, sans-serif" fill="#3a3a3a" text-anchor="middle">
  <text font-size="15.500" transform="translate(1747.600 264.600) skewY(17)" dy="5.300" textLength="37" lengthAdjust="spacingAndGlyphs">Front</text>
  <text font-size="12.500" font-style="italic" transform="translate(1769.700 203.300) rotate(21) skewX(-22)" dy="4.300" textLength="24" lengthAdjust="spacingAndGlyphs">Top</text>
  <text font-size="14.500" font-style="italic" transform="translate(1808.700 256.200) skewY(-51)" dy="4.800" textLength="22" lengthAdjust="spacingAndGlyphs">Right</text>
</g>
<!-- small cube (view options) -->
<g stroke="#333" stroke-width="1.400" stroke-linejoin="round">
  <path d="M1824.300 335.500 1837 330.600 1850.400 335.500 1837 341.500Z" fill="#fff"/>
  <path d="M1824.300 335.500 1837 341.500V357L1824.300 350.500Z" fill="#a0a0a0"/>
  <path d="M1850.400 335.500 1837 341.500V357L1850.400 350.500Z" fill="#dcdcdc"/>
</g>
<!-- bottom-right measure icons -->
<g fill="none" stroke="#333" stroke-width="1.500" stroke-linejoin="round">
  <!-- tape -->
  <ellipse cx="1773.600" cy="817.500" rx="7.600" ry="4.200"/>
  <ellipse cx="1773.600" cy="817.500" rx="4" ry="1.800"/>
  <path d="M1766 817.500V822.500H1758.500V829.500H1774C1778.500 829.500 1781.200 827 1781.200 824.500V817.500"/>
  <path d="M1761 829V827M1763.500 829V826M1766 829V827M1768.500 829V826M1771 829V827M1773.500 829V826M1776 828.500V826.500M1778.500 827.500V825" stroke-width=".900"/>
  <!-- protractor -->
  <path d="M1809 830.500C1808 819 1814 812.500 1823 812.500 1832 812.500 1838 819 1837 830.500Z" stroke-width="1.700"/>
  <path d="M1814 826.500C1814 821 1817.500 817.500 1823 817.500 1828.500 817.500 1832 821 1832 826.500H1826.500C1826.500 824 1825 823 1823 823 1821 823 1819.500 824 1819.500 826.500Z" stroke-width="1.500"/>
  <path d="M1811.500 826H1813M1812 821.500 1813.500 822.200M1814.200 817.500 1815.500 818.600M1818 815 1818.600 816.500M1823 814V815.600M1828 815 1827.400 816.500M1831.800 817.500 1830.500 818.600M1834 821.500 1832.500 822.200M1834.500 826H1833" stroke-width="1.200"/>
  <!-- scale -->
  <path d="M1867.500 811.200H1882.500" stroke-width="2"/>
  <path d="M1875 811V829" stroke-width="2"/>
  <path d="M1864.600 829.800H1885.400" stroke-width="2.400"/>
  <path d="M1867.800 812 1864.800 824H1871.200ZM1882.200 812 1879.200 824H1885.600Z" stroke-width="1.400"/>
  <path d="M1864.200 824.600H1871.800M1878.600 824.600H1886.200" stroke-width="2.200"/>
</g>
</svg>
<!-- ================= RIGHT PANEL BUTTONS ================= -->
<div class="abs" style="left:1857px;top:339px;width:47px;height:249px;background:#fff;border:1px solid #bbb;border-right:none"></div>
<div class="abs" style="left:1858px;top:388px;width:46px;height:1px;background:#bbb"></div>
<div class="abs" style="left:1858px;top:438px;width:46px;height:1px;background:#bbb"></div>
<div class="abs" style="left:1858px;top:487px;width:46px;height:1px;background:#bbb"></div>
<div class="abs" style="left:1858px;top:537px;width:46px;height:1px;background:#bbb"></div>
<svg style="left:0;top:0" width="1909" height="600" viewBox="0 0 1909 600">
  <!-- 1 BOM / configuration -->
  <g fill="none" stroke="#333">
    <rect x="1869.300" y="353" width="25.200" height="25.800" rx="4" stroke-width="1.700"/>
    <path d="M1873 359.500H1888" stroke-width="2"/>
    <path d="M1875 360V373.800M1875 364.200H1879M1875 369H1879M1875 373.800H1879" stroke-width="1.200"/>
    <path d="M1879 364.200H1891M1879 369H1891M1879 373.800H1891" stroke-width="2.700"/>
  </g>
  <!-- 2 table + cube -->
  <g stroke="#333" stroke-width="1.500" stroke-linejoin="round" fill="#fff">
    <path d="M1873 410.500 1884.500 404.800 1895 410.500 1884.500 416Z"/>
    <path d="M1873 410.500V423L1884.500 428.500V416Z"/>
    <path d="M1895 410.500V423L1884.500 428.500V416Z"/>
  </g>
  <rect x="1867.200" y="400" width="14.600" height="11.600" fill="#1a53b5"/>
  <path d="M1868.800 402h3.200v2h-3.200zM1873.200 402h3.200v2h-3.200zM1877.600 402h3.200v2h-3.200zM1868.800 405.300h3.200v2h-3.200zM1873.200 405.300h3.200v2h-3.200zM1877.600 405.300h3.200v2h-3.200zM1868.800 408.600h3.200v1.800h-3.200zM1873.200 408.600h3.200v1.800h-3.200zM1877.600 408.600h3.200v1.800h-3.200z" fill="#cfe0ff"/>
  <!-- 3 replace / exploded -->
  <g stroke="#777" stroke-width="1.100" stroke-linejoin="round" fill="#ddd">
    <path d="M1868.500 453 1871 451.500H1877V458.500L1874.500 460.500H1868.500Z"/>
    <path d="M1868.500 453H1874.500V460.500M1874.500 453 1877 451.500" fill="none"/>
  </g>
  <path d="M1873 463.500 1882.500 465.200V468.500" fill="none" stroke="#1a53b5" stroke-width="1.500" stroke-dasharray="2.600 1.600"/>
  <g stroke="#555" stroke-width="1.300" stroke-linejoin="round" fill="#fff">
    <path d="M1886.500 461H1891L1895 464V477.500H1880.500L1877.500 475V470.500L1886.500 468Z"/>
    <path d="M1886.500 461 1890.500 464.200V471.500M1890.500 464.200H1895M1890.500 471.500H1895M1890.500 471.500 1880.500 473.500 1877.500 470.500M1880.500 473.500V477.500" fill="none" stroke-width="1"/>
  </g>
  <!-- 4 named positions -->
  <g fill="none" stroke-width="1.500">
    <rect x="1883.500" y="501" width="10.500" height="19" stroke="#1a53b5" stroke-dasharray="2.600 1.800"/>
    <rect x="1868.800" y="515.800" width="25.400" height="10.400" fill="#fff" stroke="#333"/>
    <circle cx="1889" cy="521" r="5" fill="#fff" stroke="#1a53b5"/>
    <circle cx="1889" cy="521" r="2" stroke="#333" stroke-width="1.200"/>
  </g>
  <!-- 5 variable table -->
  <g font-family="Liberation Serif, serif" font-weight="bold" fill="#333">
    <text x="1865.600" y="571" font-size="23" transform="translate(1865.600 571) scale(.9 1.050) translate(-1865.600 -571)">(</text>
    <text x="1872.300" y="570.600" font-size="31" font-style="italic" textLength="18" lengthAdjust="spacingAndGlyphs">x</text>
    <text x="1890.600" y="571" font-size="23" transform="translate(1890.600 571) scale(.9 1.050) translate(-1890.600 -571)">)</text>
  </g>
  <path d="M1867.100 549h14.700v11.200h-14.700z" fill="#333"/>
  <path d="M1868.700 551h3v2.400h-3zM1873.200 551h3v2.400h-3zM1877.700 551h3v2.400h-3z" fill="#999"/>
  <path d="M1868.700 554.800h3v1.600h-3zM1873.200 554.800h3v1.600h-3zM1877.700 554.800h3v1.600h-3zM1868.700 557.800h3v1.600h-3zM1873.200 557.800h3v1.600h-3zM1877.700 557.800h3v1.600h-3z" fill="#fff"/>
</svg>

<!-- ================= BOTTOM TABS ================= -->
<div class="abs" style="left:57px;top:842px;width:1847px;height:41px;background:#d8d8d8;border-bottom-right-radius:9px"></div>
<div class="abs" style="left:116px;top:842px;width:300px;height:42px;background:#ebebeb;border-radius:0 0 8px 8px"></div>
<div class="abs" style="left:419px;top:842px;width:300px;height:41px;background:#fff;border-radius:0 0 5px 5px"></div>
<div class="abs" style="left:419px;top:880px;width:300px;height:3px;background:#1a4fad;border-radius:0 0 4px 4px"></div>
<div class="abs" style="left:721px;top:842px;width:301px;height:42px;background:#ebebeb;border-radius:0 0 8px 8px"></div>
<svg style="left:0;top:0" width="1100" height="883" viewBox="0 0 1100 883">
  <path d="M79.700 852.800h4v9h9v4h-9v9h-4v-9h-9v-4h9z" fill="#666"/>
  <!-- part studio icon -->
  <g fill="#fff" stroke="#333" stroke-width="1.400" stroke-linejoin="round">
    <path d="M146.200 849.400 148.800 853.400V874.500L146.200 872Z"/>
    <path d="M146.200 849.400H155.600L158.700 853.400H148.800Z"/>
    <rect x="148.800" y="853.400" width="9.900" height="21.100"/>
    <path d="M134.600 856.800 138.300 860V874.500L134.600 871.800Z"/>
    <path d="M134.600 856.800H143L146.500 860H138.300Z"/>
    <rect x="138.300" y="860" width="8.200" height="14.500"/>
  </g>
  <!-- assembly icon -->
  <g stroke="#333" stroke-width="1.300" stroke-linejoin="round">
    <path d="M436 849H457L462 854V875H441L436 870.500Z" fill="#fff"/>
    <path d="M436 849H450.500L454.500 853V867H441L436 862.500Z" fill="#9a9a9a" stroke="#666" stroke-width="1"/>
    <path d="M436 849 441 854H462M441 854V875" fill="none" stroke-width="1.100"/>
  </g>
  <!-- drawing icon -->
  <g fill="#fff" stroke="#333" stroke-width="1.600">
    <rect x="739.600" y="851.100" width="25.200" height="22"/>
    <path d="M754.500 873V866.500H764.500" fill="none"/>
  </g>
</svg>
<div class="t" style="left:164.900px;top:853.600px;font-size:20.100px;color:#666;letter-spacing:.2px">Part Studio 1</div>
<div class="t" style="left:469px;top:853.600px;font-size:20.400px;color:#333">Assembly 1</div>
<div class="t" style="left:771.600px;top:853.600px;font-size:20.400px;color:#666">Assembly 1 Drawing 1</div>
</body>
</html>
